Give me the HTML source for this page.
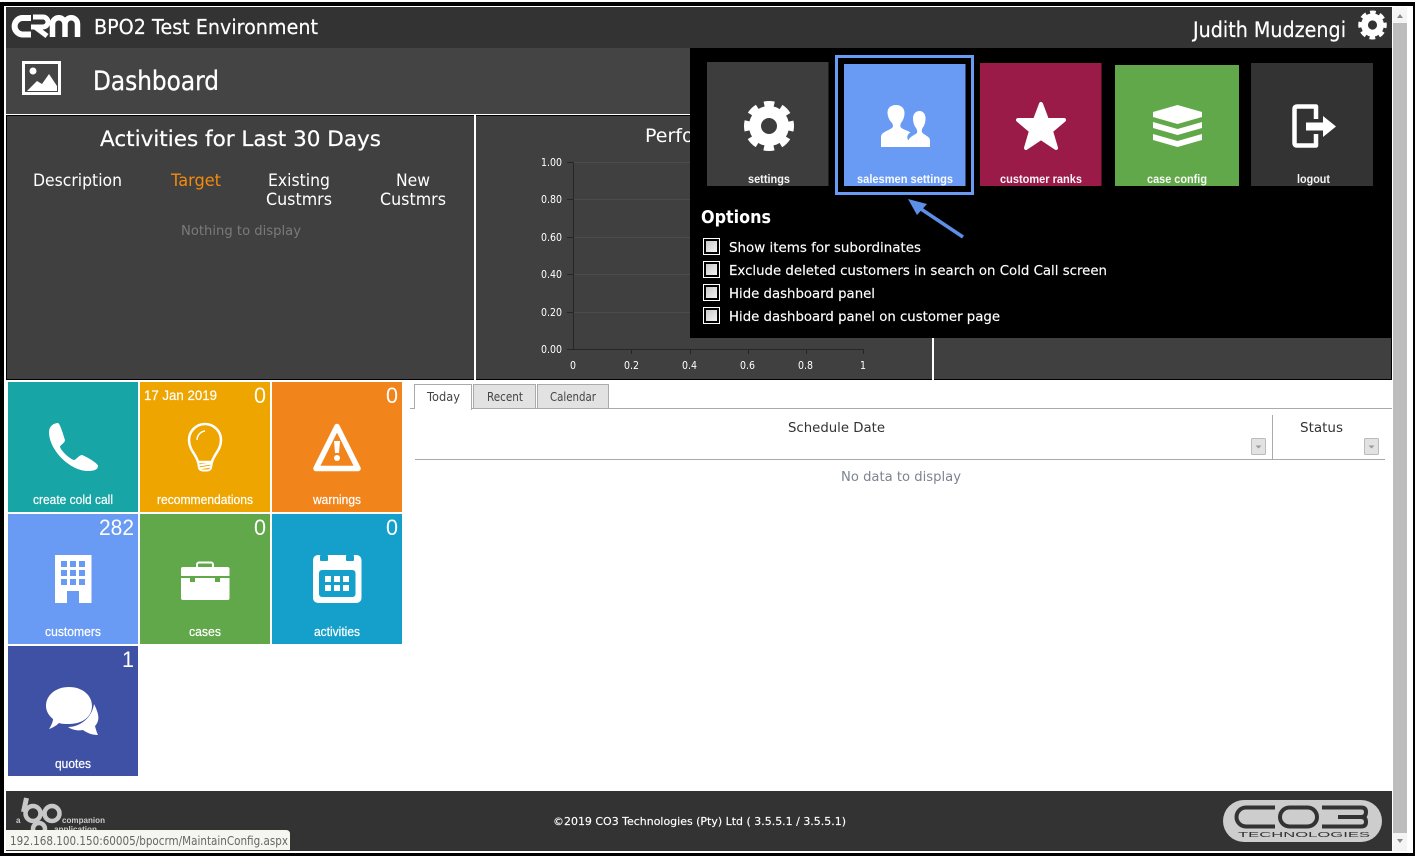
<!DOCTYPE html>
<html><head><meta charset="utf-8"><title>Dashboard</title>
<style>
html,body{margin:0;padding:0;background:#fff;width:1415px;height:858px;overflow:hidden}
svg{display:block}
.d{font-family:"DejaVu Sans",sans-serif}
.a{font-family:"Liberation Sans",sans-serif}
</style></head><body>
<svg width="1415" height="858" viewBox="0 0 1415 858" xmlns="http://www.w3.org/2000/svg">
<defs>
<g id="gear">
<circle r="14" fill="none" stroke="#fff" stroke-width="12"/>
<circle r="22" fill="none" stroke="#fff" stroke-width="6" stroke-dasharray="10 7.280" stroke-dashoffset="5"/>
</g>
<linearGradient id="cb" x1="0" y1="0" x2="1" y2="1"><stop offset="0" stop-color="#c8c8c8"/><stop offset="1" stop-color="#f4f4f4"/></linearGradient>
</defs>
<rect width="1415" height="858" fill="#fff"/>
<!-- outer frame -->
<g fill="#000">
<rect x="0" y="2" width="1415" height="4"/>
<rect x="0" y="853" width="1415" height="3"/>
<rect x="0" y="2" width="4" height="854"/>
<rect x="1413" y="2" width="2" height="854"/>
</g>
<!-- header -->
<rect x="6" y="7" width="1386" height="41" fill="#333"/>
<rect x="6" y="48" width="1386" height="66" fill="#444"/>
<!-- CRM logo -->
<g fill="none" stroke="#fff">
<path d="M31 18H22a8.300 8.300 0 0 0 0 16.500H31" stroke-width="6"/>
<path d="M31 27H43a5 5 0 0 0 0-10H33" stroke-width="5"/>
<path d="M35 27L47 36" stroke-width="5"/>
<path d="M52.500 37V24a6 6 0 0 1 12.500 0V37M65 24a6 6 0 0 1 12.500 0V37" stroke-width="5.500"/>
</g>
<text class="d" x="94" y="34" font-size="20" fill="#fff" stroke="#fff" stroke-width=".2" textLength="224" lengthAdjust="spacingAndGlyphs">BPO2 Test Environment</text>
<text class="d" x="1193" y="37" font-size="21" fill="#fff" stroke="#fff" stroke-width=".2" textLength="153" lengthAdjust="spacingAndGlyphs">Judith Mudzengi</text>
<use href="#gear" transform="translate(1372.500 25) scale(.57 .58)"/>
<!-- image icon -->
<rect x="23.500" y="62.500" width="36" height="31" fill="none" stroke="#fff" stroke-width="3"/>
<circle cx="33" cy="71" r="3.500" fill="#fff"/>
<path d="M27 91L37 81L42 84L49 74L57 86V91Z" fill="#fff"/>
<text class="d" x="93" y="90" font-size="27" fill="#fff" stroke="#fff" stroke-width=".3" textLength="126" lengthAdjust="spacingAndGlyphs">Dashboard</text>
<!-- panels -->
<rect x="6" y="115" width="1386" height="265" fill="#000"/>
<rect x="7" y="116" width="467" height="263" fill="#404040"/>
<rect x="476" y="116" width="456" height="263" fill="#404040"/>
<rect x="934" y="116" width="457" height="263" fill="#404040"/>
<rect x="474" y="115" width="2" height="265" fill="#fff"/>
<rect x="932" y="115" width="2" height="265" fill="#fff"/>
<text class="d" x="100" y="146" font-size="21" fill="#fff" stroke="#fff" stroke-width=".2" textLength="281" lengthAdjust="spacingAndGlyphs">Activities for Last 30 Days</text>
<g class="d" font-size="17" fill="#fff">
<text x="33" y="186" textLength="89" lengthAdjust="spacingAndGlyphs">Description</text>
<text x="171" y="186" fill="#f58a0b" textLength="50" lengthAdjust="spacingAndGlyphs">Target</text>
<text x="268" y="186" textLength="62" lengthAdjust="spacingAndGlyphs">Existing</text>
<text x="266" y="205" textLength="66" lengthAdjust="spacingAndGlyphs">Custmrs</text>
<text x="396" y="186" textLength="34" lengthAdjust="spacingAndGlyphs">New</text>
<text x="380" y="205" textLength="66" lengthAdjust="spacingAndGlyphs">Custmrs</text>
</g>
<text class="d" x="181" y="235" font-size="13" fill="#7a7a7a" textLength="120" lengthAdjust="spacingAndGlyphs">Nothing to display</text>
<text class="d" x="645" y="142" font-size="19" fill="#fff">Performance</text>
<!-- chart -->
<g stroke="#4c4c4c" stroke-width="1">
<path d="M573 162.500H864M573 199.500H864M573 237.500H864M573 274.500H864M573 312.500H864"/>
</g>
<g stroke="#262626" stroke-width="1" fill="none">
<path d="M573.500 162V350M567 349.500H864M567 162.500H573M567 199.500H573M567 237.500H573M567 274.500H573M567 312.500H573M631.500 349V354M690.500 349V354M748.500 349V354M806.500 349V354M863.500 349V354"/>
</g>
<g class="d" font-size="11" fill="#fff">
<text x="541" y="166" textLength="21" lengthAdjust="spacingAndGlyphs">1.00</text>
<text x="541" y="203" textLength="21" lengthAdjust="spacingAndGlyphs">0.80</text>
<text x="541" y="241" textLength="21" lengthAdjust="spacingAndGlyphs">0.60</text>
<text x="541" y="278" textLength="21" lengthAdjust="spacingAndGlyphs">0.40</text>
<text x="541" y="316" textLength="21" lengthAdjust="spacingAndGlyphs">0.20</text>
<text x="541" y="353" textLength="21" lengthAdjust="spacingAndGlyphs">0.00</text>
<text x="570" y="369" textLength="6" lengthAdjust="spacingAndGlyphs">0</text>
<text x="624" y="369" textLength="15" lengthAdjust="spacingAndGlyphs">0.2</text>
<text x="682" y="369" textLength="15" lengthAdjust="spacingAndGlyphs">0.4</text>
<text x="740" y="369" textLength="15" lengthAdjust="spacingAndGlyphs">0.6</text>
<text x="798" y="369" textLength="15" lengthAdjust="spacingAndGlyphs">0.8</text>
<text x="860" y="369" textLength="6" lengthAdjust="spacingAndGlyphs">1</text>
</g>
<!-- dropdown -->
<rect x="690" y="48" width="702" height="290" fill="#000"/>
<rect x="707" y="62" width="121.500" height="124" fill="#3d3d3d"/>
<rect x="836.500" y="56.500" width="136" height="137" fill="none" stroke="#6a9bf4" stroke-width="3"/>
<rect x="844" y="64" width="121.500" height="122" fill="#6a9bf4"/>
<rect x="980" y="63" width="121.500" height="123" fill="#9a1b48"/>
<rect x="1115" y="65" width="124" height="121" fill="#61a84a"/>
<rect x="1251" y="63" width="122" height="123" fill="#333"/>
<use href="#gear" transform="translate(769 126)"/>
<!-- people -->
<path fill="#fff" d="M881 147V137C881 132 888 131 892 128C893.500 126.500 893 124.500 892 123C889 120 887.500 116 887.500 112.500C887.500 107.500 891.500 105 896 105C901 105 904.500 108 904.500 113C904.500 117 903 120.500 901 123C900 125 900 127 901.500 128C904 130 908 130.500 910.500 132.500C907.500 134 906.500 137 908 140C911 141 915 142 917 143V147Z"/>
<path fill="#fff" d="M908.500 147V140.500C909 137 914 135.500 917 133C917.500 131.500 917 129.500 916 128C914 125.500 913 122 913 118C913 114 916 111 919.500 111C923 111 925.500 114 925.500 118C925.500 122 924.500 125.500 922.500 128C921.500 130 921.500 131.500 922.500 133C925 135.500 930 136.500 930 140.500V147Z"/>
<!-- star -->
<path fill="#fff" stroke="#fff" stroke-width="4" stroke-linejoin="round" d="M1041 104L1047 120L1064 120L1051 131L1056 148L1041 138L1026 148L1031 131L1018 120L1035 120Z"/>
<!-- stack -->
<g fill="#fff">
<path d="M1177.500 105L1202 112V117L1177.500 124L1153 117V112Z"/>
<path d="M1153 122L1177.500 129L1202 122V128L1177.500 135L1153 128Z"/>
<path d="M1153 134L1177.500 141L1202 134V140L1177.500 147L1153 140Z"/>
</g>
<!-- logout -->
<path fill="none" stroke="#fff" stroke-width="4.500" stroke-linejoin="round" d="M1316 119V106.500H1297Q1294.500 106.500 1294.500 109V143Q1294.500 145.500 1297 145.500H1316V134"/>
<path fill="#fff" d="M1306 122.500H1323V116L1336 126.500L1323 137V130.500H1306Z"/>
<g class="a" font-size="12" fill="#fff" font-weight="bold" fill-opacity=".95">
<text x="748" y="183" textLength="42" lengthAdjust="spacingAndGlyphs">settings</text>
<text x="857" y="183" textLength="96" lengthAdjust="spacingAndGlyphs">salesmen settings</text>
<text x="1000" y="183" textLength="82" lengthAdjust="spacingAndGlyphs">customer ranks</text>
<text x="1147" y="183" textLength="60" lengthAdjust="spacingAndGlyphs">case config</text>
<text x="1297" y="183" textLength="33" lengthAdjust="spacingAndGlyphs">logout</text>
</g>
<!-- arrow -->
<path d="M963 237L918 207" stroke="#5b8fe8" stroke-width="3.500" fill="none"/>
<path d="M908 199L927 204L917 215Z" fill="#5b8fe8"/>
<text class="d" x="701" y="223" font-size="18" font-weight="bold" fill="#fff" textLength="70" lengthAdjust="spacingAndGlyphs">Options</text>
<g stroke="#fff" fill="#000">
<rect x="703.500" y="238.500" width="16" height="16"/>
<rect x="703.500" y="261.500" width="16" height="16"/>
<rect x="703.500" y="284.500" width="16" height="16"/>
<rect x="703.500" y="307.500" width="16" height="16"/>
</g>
<g fill="url(#cb)">
<rect x="706" y="241" width="11" height="11"/>
<rect x="706" y="264" width="11" height="11"/>
<rect x="706" y="287" width="11" height="11"/>
<rect x="706" y="310" width="11" height="11"/>
</g>
<g class="d" font-size="13" fill="#fff" stroke="#fff" stroke-width=".15">
<text x="729" y="252" textLength="192" lengthAdjust="spacingAndGlyphs">Show items for subordinates</text>
<text x="729" y="275" textLength="378" lengthAdjust="spacingAndGlyphs">Exclude deleted customers in search on Cold Call screen</text>
<text x="729" y="298" textLength="146" lengthAdjust="spacingAndGlyphs">Hide dashboard panel</text>
<text x="729" y="321" textLength="271" lengthAdjust="spacingAndGlyphs">Hide dashboard panel on customer page</text>
</g>
<!-- tiles -->
<rect x="8" y="382" width="130" height="130" fill="#17a5a5"/>
<rect x="140" y="382" width="130" height="130" fill="#efa500"/>
<rect x="272" y="382" width="130" height="130" fill="#f2841c"/>
<rect x="8" y="514" width="130" height="130" fill="#6a9bf4"/>
<rect x="140" y="514" width="130" height="130" fill="#61a84a"/>
<rect x="272" y="514" width="130" height="130" fill="#15a0cb"/>
<rect x="8" y="646" width="130" height="130" fill="#3f51a5"/>
<g class="a" font-size="12.500" fill="#fff" stroke="#fff" stroke-width=".2">
<text x="33" y="504" textLength="80" lengthAdjust="spacingAndGlyphs">create cold call</text>
<text x="157" y="504" textLength="96" lengthAdjust="spacingAndGlyphs">recommendations</text>
<text x="313" y="504" textLength="48" lengthAdjust="spacingAndGlyphs">warnings</text>
<text x="45" y="636" textLength="56" lengthAdjust="spacingAndGlyphs">customers</text>
<text x="189" y="636" textLength="32" lengthAdjust="spacingAndGlyphs">cases</text>
<text x="314" y="636" textLength="46" lengthAdjust="spacingAndGlyphs">activities</text>
<text x="55" y="768" textLength="36" lengthAdjust="spacingAndGlyphs">quotes</text>
</g>
<g class="a" font-size="22" fill="#fff">
<text x="254" y="403" textLength="12" lengthAdjust="spacingAndGlyphs">0</text>
<text x="386" y="403" textLength="12" lengthAdjust="spacingAndGlyphs">0</text>
<text x="99" y="535" textLength="35" lengthAdjust="spacingAndGlyphs">282</text>
<text x="254" y="535" textLength="12" lengthAdjust="spacingAndGlyphs">0</text>
<text x="386" y="535" textLength="12" lengthAdjust="spacingAndGlyphs">0</text>
<text x="122" y="667" textLength="12" lengthAdjust="spacingAndGlyphs">1</text>
</g>
<text class="a" x="144" y="400" font-size="14" fill="#fff" stroke="#fff" stroke-width=".2" textLength="73" lengthAdjust="spacingAndGlyphs">17 Jan 2019</text>
<!-- phone -->
<path fill="#fff" d="M49 432C49 426 54 423 58 423C60 423 64 437 65 440C65 443 60 445 60 447C62 452 70 459 74 460C76 460 79 455 82 455C85 456 98 463 98 466C98 470 93 471 88 471C70 471 49 450 49 432Z"/>
<!-- bulb -->
<g fill="none" stroke="#fff" stroke-width="2.500">
<path d="M198 462C196 454 189 450 189 440A16 16 0 0 1 221 440C221 450 214 454 212 462Z"/>
<path d="M198 462L199 468Q200 470.500 203 470.500H207Q210 470.500 211 468L212 462M198.500 465.500L211.500 463.500M199 468.500L211 466.500" stroke-width="2"/>
<path d="M197 440A9 9 0 0 1 205 431" stroke-width="1.500"/>
</g>
<!-- warning -->
<path fill="none" stroke="#fff" stroke-width="5.500" stroke-linejoin="round" d="M337 426.500L358 468.500H316Z"/>
<path fill="#fff" d="M334 441H340L339 453H335Z"/><circle cx="337" cy="458" r="3" fill="#fff"/>
<!-- building -->
<path fill="#fff" d="M55 555H91.500V603H79V591H67V603H55Z"/>
<g fill="#6a9bf4">
<rect x="61" y="561" width="6" height="6"/><rect x="70" y="561" width="6" height="6"/><rect x="79" y="561" width="6" height="6"/>
<rect x="61" y="570" width="6" height="6"/><rect x="70" y="570" width="6" height="6"/><rect x="79" y="570" width="6" height="6"/>
<rect x="61" y="579" width="6" height="6"/><rect x="70" y="579" width="6" height="6"/><rect x="79" y="579" width="6" height="6"/>
</g>
<!-- briefcase -->
<rect x="197" y="562.500" width="16" height="7" rx="2" fill="none" stroke="#fff" stroke-width="2"/>
<rect x="181" y="567" width="48.500" height="33" rx="2" fill="#fff"/>
<rect x="181" y="576" width="48.500" height="2" fill="#61a84a"/>
<rect x="190" y="576" width="5" height="6" fill="#61a84a"/><rect x="215" y="576" width="5" height="6" fill="#61a84a"/>
<!-- calendar -->
<rect x="313" y="555" width="48.500" height="48" rx="5" fill="#fff"/>
<rect x="320" y="555" width="8" height="6" rx="1" fill="#15a0cb"/><rect x="346" y="555" width="8" height="6" rx="1" fill="#15a0cb"/>
<rect x="319" y="570" width="36.500" height="27" rx="3" fill="#15a0cb"/>
<g fill="#fff">
<rect x="325" y="576" width="6" height="6"/><rect x="334" y="576" width="6" height="6"/><rect x="343" y="576" width="6" height="6"/>
<rect x="325" y="585" width="6" height="6"/><rect x="334" y="585" width="6" height="6"/><rect x="343" y="585" width="6" height="6"/>
</g>
<!-- chat -->
<path fill="#fff" d="M94 704C98 712 101 720 95 726C96 730 97 733 98 735C92 735 87 733 83 730C78 731 72 730 68 727C80 727 92 718 94 704Z"/>
<path fill="#fff" d="M69 687C82 687 92 695 92 706C92 717 82 724 69 724C65 724 62 724 59 723C56 726 52 728 49 729C51 726 53 722 53 719C49 716 46 711 46 706C46 695 56 687 69 687Z"/>
<!-- tabs -->
<path d="M410 408.500H1392" stroke="#aaa"/>
<path d="M414.500 408.500V384.500H471.500V410" fill="#fff" stroke="#aaa"/>
<rect x="415" y="385" width="56" height="26" fill="#fff"/>
<rect x="473.500" y="384.500" width="62" height="24" fill="#e2e2e2" stroke="#aaa"/>
<rect x="537.500" y="384.500" width="71" height="24" fill="#e2e2e2" stroke="#aaa"/>
<g class="d" font-size="12" fill="#444">
<text x="427" y="401" textLength="33" lengthAdjust="spacingAndGlyphs">Today</text>
<text x="487" y="401" textLength="36" lengthAdjust="spacingAndGlyphs">Recent</text>
<text x="550" y="401" textLength="46" lengthAdjust="spacingAndGlyphs">Calendar</text>
</g>
<!-- table -->
<path d="M415 459.500H1385" stroke="#aaa"/>
<path d="M1272.500 415V459" stroke="#aaa"/>
<g class="d" font-size="13" fill="#333">
<text x="788" y="432" textLength="97" lengthAdjust="spacingAndGlyphs">Schedule Date</text>
<text x="1300" y="432" textLength="43" lengthAdjust="spacingAndGlyphs">Status</text>
</g>
<rect x="1251.500" y="438.500" width="14" height="16" rx="1" fill="#e2e2e2" stroke="#bbb"/>
<rect x="1364.500" y="438.500" width="14" height="16" rx="1" fill="#e2e2e2" stroke="#bbb"/>
<path d="M1255.500 445.500H1261.500L1258.500 448.500ZM1368.500 445.500H1374.500L1371.500 448.500Z" fill="#999"/>
<text class="d" x="841" y="481" font-size="13" fill="#7c8490" textLength="120" lengthAdjust="spacingAndGlyphs">No data to display</text>
<!-- footer -->
<rect x="6" y="791" width="1386" height="60" fill="#333"/>
<g fill="none" stroke="#c8c8c8">
<path d="M26.500 798L23.500 812" stroke-width="5"/>
<circle cx="33" cy="813.500" r="7.500" stroke-width="4.500"/>
<circle cx="52" cy="813.500" r="7.500" stroke-width="4.500"/>
<circle cx="39" cy="829" r="6" stroke-width="4.500"/>
</g>
<g class="a" font-size="8" fill="#ccc" font-weight="bold">
<text x="16" y="823">a</text>
<text x="62" y="823" textLength="43" lengthAdjust="spacingAndGlyphs">companion</text>
<text x="54" y="832" textLength="43" lengthAdjust="spacingAndGlyphs">application</text>
</g>
<text class="d" x="553" y="825" font-size="11" fill="#fff" stroke="#fff" stroke-width=".15" textLength="293" lengthAdjust="spacingAndGlyphs">©2019 CO3 Technologies (Pty) Ltd ( 3.5.5.1 / 3.5.5.1)</text>
<rect x="1223" y="800" width="159" height="42" rx="21" fill="#cdcdcd"/>
<g fill="none" stroke="#333" stroke-width="4">
<path d="M1275 807.500H1246a9.500 9.500 0 0 0 0 19H1275"/>
<rect x="1280" y="807.500" width="37" height="19" rx="9.500"/>
<path d="M1322 807.500H1361Q1366 807.500 1366 812Q1366 817 1361 817H1338M1361 817Q1366 817 1366 822Q1366 826.500 1361 826.500H1322"/>
</g>
<text class="a" x="1238" y="837" font-size="7" fill="#333" textLength="132" lengthAdjust="spacingAndGlyphs">TECHNOLOGIES</text>
<!-- tooltip -->
<path d="M6 830H286Q290 830 290 834V850H6Z" fill="#f6f6f0"/>
<text class="d" x="10" y="845" font-size="12" fill="#666" textLength="278" lengthAdjust="spacingAndGlyphs">192.168.100.150:60005/bpocrm/MaintainConfig.aspx</text>
<!-- scrollbar -->
<rect x="1393" y="7" width="14" height="844" fill="#f4f4f4"/>
<rect x="1393" y="23" width="14" height="810" fill="#bdbdbd"/>
<path d="M1397 18L1400 14L1403 18ZM1397 839H1403L1400 843Z" fill="#888"/>
</svg>
</body></html>
